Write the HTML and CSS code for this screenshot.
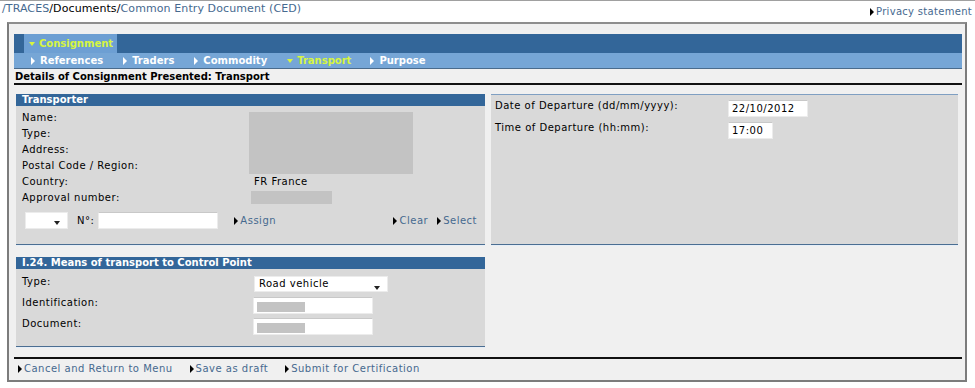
FILE: index.html
```html
<!DOCTYPE html>
<html lang="en">
<head>
    <meta charset="UTF-8">
    <title>TRACES - Common Entry Document (CED)</title>
    <link rel="stylesheet" href="styles.css">
</head>
<body>
    <div class="top">
        <div class="crumbs"><a href="#">/TRACES</a>/Documents/<a href="#">Common Entry Document (CED)</a></div>
        <a class="more privacy" href="#">Privacy statement</a>
    </div>

    <div class="frame">
        <div class="menu">
            <span class="tab open">Consignment</span>
        </div>
        <div class="submenu">
            <span class="item">References</span>
            <span class="item">Traders</span>
            <span class="item">Commodity</span>
            <span class="item open">Transport</span>
            <span class="item">Purpose</span>
        </div>

        <div class="title">Details of Consignment Presented: Transport</div>

        <div class="panels">
            <div class="panel">
                <div class="panel-head">Transporter</div>
                <div class="panel-body transporter">
                    <div class="info">
                        <span class="redact big"></span>
                        <span class="value country">FR France</span>
                        <span class="redact approval"></span>
                        <span class="label">Name:</span>
                        <span class="label">Type:</span>
                        <span class="label">Address:</span>
                        <span class="label">Postal Code / Region:</span>
                        <span class="label">Country:</span>
                        <span class="label">Approval number:</span>
                    </div>
                    <div class="actions">
                        <span class="select small"></span>
                        <span class="no">N°:</span>
                        <span class="field wide"></span>
                        <a class="more assign" href="#">Assign</a>
                        <a class="more clear" href="#">Clear</a>
                        <a class="more" href="#">Select</a>
                    </div>
                </div>
            </div>

            <div class="panel plain">
                <div class="panel-body dates">
                    <span class="label">Date of Departure (dd/mm/yyyy):</span>
                    <span class="field date">22/10/2012</span>
                    <span class="label">Time of Departure (hh:mm):</span>
                    <span class="field time">17:00</span>
                </div>
            </div>
        </div>

        <div class="panel means">
            <div class="panel-head">I.24. Means of transport to Control Point</div>
            <div class="panel-body transport">
                <span class="label">Type:</span>
                <span class="select road">Road vehicle</span>
                <span class="label">Identification:</span>
                <span class="field wide"><span class="redact mini"></span></span>
                <span class="label">Document:</span>
                <span class="field wide"><span class="redact mini"></span></span>
            </div>
        </div>

        <div class="footer">
            <a class="more" href="#">Cancel and Return to Menu</a>
            <a class="more" href="#">Save as draft</a>
            <a class="more" href="#">Submit for Certification</a>
        </div>
    </div>
</body>
</html>
```

FILE: styles.css
```css
body {
    margin: 0;
    font-family: "DejaVu Sans", Verdana, sans-serif;
    font-size: 10px;
    letter-spacing: 0.5px;
    color: #000;
    background: #fff;
    border-top: 1px solid #a0a0a0;
}

a {
    color: #46698f;
    text-decoration: none;
}

/* breadcrumb + privacy */
.top {
    display: flex;
    justify-content: space-between;
    align-items: flex-start;
    height: 21px;
}

.crumbs {
    font-size: 11px;
    letter-spacing: 0.1px;
    line-height: 13px;
    margin: 1px 0 0 2px;
}

.privacy {
    margin: 5px 3px 0 0;
    line-height: 12px;
    letter-spacing: 0.3px;
}

/* black arrow in front of links */
.more {
    display: inline-flex;
    align-items: center;
}

.more::before {
    content: "";
    border-left: 4px solid #000;
    border-top: 4px solid transparent;
    border-bottom: 4px solid transparent;
    margin-right: 2px;
}

/* main frame */
.frame {
    box-sizing: border-box;
    width: 960px;
    height: 360px;
    margin-left: 7px;
    padding: 10px 3px 0 5px;
    background: #f0f0f0;
    border: 2px solid #7c7c7c;
    border-top-color: #8e8e8e;
}

.menu {
    display: flex;
    height: 19px;
    padding-left: 10px;
    background: #336699;
}

.tab {
    display: flex;
    align-items: center;
    width: 93px;
    padding-left: 5px;
    box-sizing: border-box;
    background: #6d9fd3;
    color: #d7f53f;
    font-weight: bold;
    letter-spacing: 0;
}

.submenu {
    display: flex;
    height: 15px;
    padding-left: 17px;
    background: #76a6d6;
    border-bottom: 1px solid #4a6b8c;
}

.item {
    display: flex;
    align-items: center;
    margin-right: 20px;
    color: #fff;
    font-weight: bold;
    letter-spacing: 0;
}

.item::before,
.tab::before {
    content: "";
    margin-right: 5px;
    border-left: 4px solid #fff;
    border-top: 4px solid transparent;
    border-bottom: 4px solid transparent;
}

.tab.open::before,
.item.open::before {
    border-top: 4px solid currentColor;
    border-left: 3px solid transparent;
    border-right: 3px solid transparent;
    border-bottom: 0;
    margin-right: 4px;
}

.item.open {
    color: #d7f53f;
    margin-right: 19px;
}

.title {
    padding: 1px 0 0 1px;
    line-height: 13px;
    font-weight: bold;
    letter-spacing: 0;
    border-bottom: 2px solid #111;
}

/* panels */
.panels {
    display: grid;
    grid-template-columns: 469px 467px;
    gap: 6px;
    margin: 9px 0 0 2px;
}

.panel-head {
    height: 12px;
    line-height: 12px;
    padding-left: 6px;
    background: #336699;
    color: #fff;
    font-weight: bold;
    letter-spacing: 0;
}

.panel-body {
    background: #d9d9d9;
    border-bottom: 1px solid #4b6e92;
    box-shadow: 0 1px 0 #e6eef7;
}

.panel.plain .panel-body {
    height: 100%;
    box-sizing: border-box;
    border-top: 1px solid #7f9fc2;
}

.transporter {
    padding: 4px 8px 15px 6px;
}

.info {
    display: grid;
    grid-template-columns: 227px 1fr;
    grid-auto-rows: 16px;
}

.label {
    grid-column: 1;
    line-height: 16px;
}

.redact {
    display: block;
    background: #c3c3c3;
}

.redact.big {
    grid-column: 2;
    grid-row: 1 / span 4;
    width: 164px;
    height: 62px;
    margin-top: 2px;
}

.country {
    grid-column: 2;
    grid-row: 5;
    padding-left: 5px;
    line-height: 16px;
}

.redact.approval {
    grid-column: 2;
    grid-row: 6;
    width: 81px;
    height: 13px;
    margin: 1px 0 0 2px;
}

.actions {
    display: flex;
    align-items: center;
    height: 17px;
    margin-top: 6px;
}

.select {
    position: relative;
    box-sizing: border-box;
    background: #fff;
    border: 1px solid #ececec;
}

.select::after {
    content: "";
    position: absolute;
    right: 7px;
    top: 8px;
    border-top: 4px solid #222;
    border-left: 3px solid transparent;
    border-right: 3px solid transparent;
}

.select.small {
    width: 43px;
    height: 17px;
    margin-left: 3px;
}

.no {
    margin: 0 4px 0 9px;
}

.field {
    box-sizing: border-box;
    display: flex;
    align-items: center;
    background: #fff;
    border: 1px solid #ececec;
    border-top-color: #c8c8c8;
    padding-left: 3px;
}

.field.wide {
    width: 120px;
    height: 17px;
}

.assign {
    margin-left: 16px;
}

.clear {
    margin: 0 9px 0 auto;
}

.dates {
    display: grid;
    grid-template-columns: 233px auto;
    grid-auto-rows: 17px;
    row-gap: 5px;
    align-items: start;
    justify-items: start;
    padding: 5px 0 0 4px;
}

.dates .label {
    line-height: 12px;
}

.field.date {
    width: 80px;
    height: 17px;
}

.field.time {
    width: 45px;
    height: 17px;
}

.means {
    width: 469px;
    margin: 12px 0 0 2px;
}

.transport {
    display: grid;
    grid-template-columns: 231px auto;
    grid-auto-rows: 16px;
    row-gap: 5px;
    align-items: start;
    justify-items: start;
    padding: 7px 0 12px 6px;
}

.transport .label {
    line-height: 12px;
}

.select.road {
    width: 134px;
    height: 16px;
    line-height: 14px;
    padding-left: 4px;
    margin-left: 1px;
}

.select.road::after {
    top: 9px;
}

.redact.mini {
    width: 48px;
    height: 10px;
    margin-top: 3px;
}

.footer {
    display: flex;
    gap: 17px;
    margin-top: 10px;
    padding: 4px 0 0 4px;
    line-height: 12px;
    border-top: 2px solid #111;
}
```
